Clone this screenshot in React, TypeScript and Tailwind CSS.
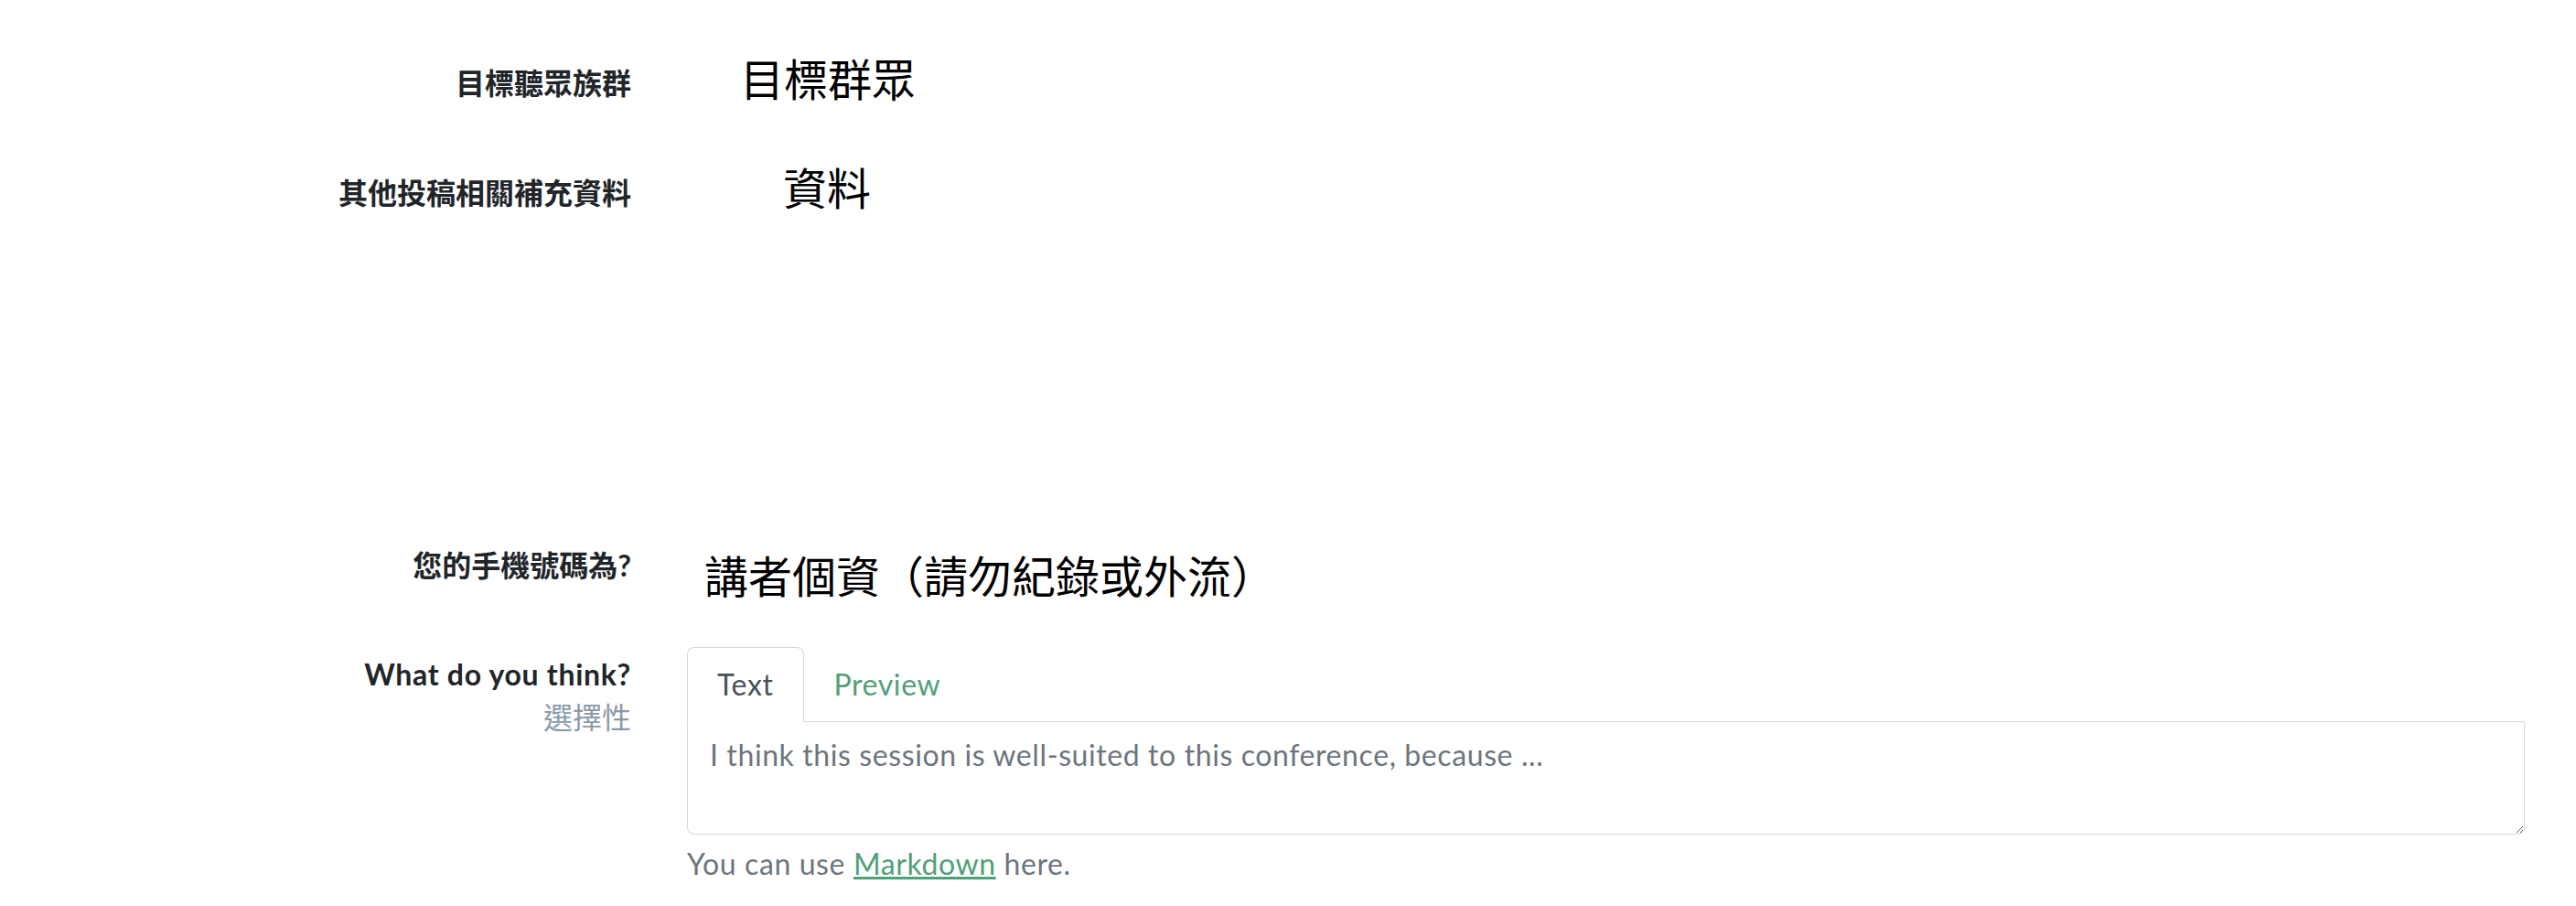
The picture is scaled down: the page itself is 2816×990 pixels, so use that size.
import React from "react";

const font = "font-['Lato','Noto_Sans_CJK_TC',sans-serif]";

const Label: React.FC<{ children: React.ReactNode; className?: string }> = ({ children, className = "" }) => (
  <div className={`w-[690px] shrink-0 text-right text-[32px] leading-[40px] font-bold text-[#212529] ${className}`}>
    {children}
  </div>
);

export default function App() {
  return (
    <div className={`w-full min-h-[990px] bg-white ${font}`}>
      <div className="pt-[59px]">
        {/* 目標聽眾族群 */}
        <div className="flex items-start">
          <Label className="mt-[12px]">目標聽眾族群</Label>
          <div className="ml-[119px] text-[48px] leading-[56px] text-black">目標群眾</div>
        </div>

        {/* 補充資料 */}
        <div className="flex items-start mt-[63px]">
          <Label className="mt-[13px]">其他投稿相關補充資料</Label>
          <div className="ml-[166px] text-[48px] leading-[56px] text-black">資料</div>
        </div>

        {/* 手機號碼 */}
        <div className="flex items-start mt-[364px]">
          <Label>您的手機號碼為?</Label>
          <div className="ml-[80px] mt-[4px] text-[48px] leading-[56px] text-black">
            講者個資（請勿紀錄或外流）
          </div>
        </div>

        {/* What do you think */}
        <div className="flex items-start mt-[49px]">
          <div className="w-[690px] shrink-0 text-right pt-[10px]">
            <div className="text-[32px] leading-[40px] font-bold tracking-[0.7px] text-[#212529]">What do you think?</div>
            <div className="mt-[7px] text-[32px] leading-[40px] text-[#8a9aa9]">選擇性</div>
          </div>

          <div className="ml-[61px] mr-[56px] flex-1 tracking-[0.6px]">
            <div className="flex border-b border-[#cfd9dc]">
              <div className="-mb-px px-8 py-4 text-[32px] leading-[48px] text-[#495057] bg-white border border-[#cfd9dc] border-b-white rounded-t-[8px]">
                Text
              </div>
              <div className="-mb-px px-8 py-4 text-[32px] leading-[48px] text-[#50a077] border border-transparent">
                Preview
              </div>
            </div>
            <textarea
              className="block w-full h-[123px] px-6 py-3 text-[32px] leading-[48px] tracking-[0.6px] text-[#495057] placeholder:text-[#6c757d] border border-t-0 border-[#cfd9dc] rounded-b-[8px] outline-none"
              placeholder="I think this session is well-suited to this conference, because ..."
            />
            <p className="mt-[8px] text-[32px] leading-[48px] text-[#6c757d]">
              You can use{" "}
              <a href="#" className="text-[#50a077] underline">
                Markdown
              </a>{" "}
              here.
            </p>
          </div>
        </div>
      </div>
    </div>
  );
}
